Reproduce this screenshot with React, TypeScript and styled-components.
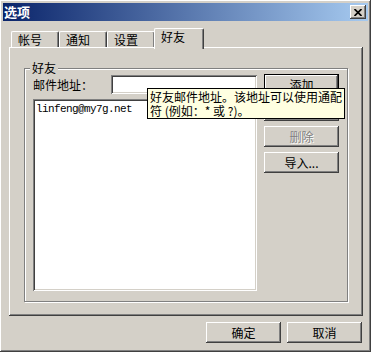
import React from "react";
import styled, { createGlobalStyle } from "styled-components";

const GlobalStyle = createGlobalStyle`
  html, body {
    margin: 0;
    padding: 0;
    background: #d4d0c8;
  }
  body {
    font-family: "Noto Sans CJK SC", "Liberation Sans", sans-serif;
    font-size: 12px;
    color: #000;
  }
`;

const tabs = ["帐号", "通知", "设置", "好友"];

function CloseGlyph() {
  return (
    <svg width="8" height="7" viewBox="0 0 8 7">
      <path d="M0.5 0 L7.5 7 M7.5 0 L0.5 7" stroke="#000" strokeWidth="1.7" fill="none" />
    </svg>
  );
}

export default function App() {
  return (
    <>
      <GlobalStyle />
      <Window>
        <TitleBar>
          <Title>选项</Title>
          <CloseButton>
            <CloseGlyph />
          </CloseButton>
        </TitleBar>
        <Body>
          <TabRow>
            {tabs.map((t) => (
              <Tab key={t} $active={t === "好友"}>
                {t}
              </Tab>
            ))}
          </TabRow>
          <Panel>
            <GroupBox>
              <Legend>好友</Legend>
              <LeftCol>
                <FieldRow>
                  <Label>邮件地址：</Label>
                  <Input />
                </FieldRow>
                <ListBox>
                  <ListItem>linfeng@my7g.net</ListItem>
                </ListBox>
              </LeftCol>
              <RightCol>
                <Button $default>添加</Button>
                <Button disabled>修改</Button>
                <Button disabled>删除</Button>
                <Button>导入...</Button>
              </RightCol>
            </GroupBox>
          </Panel>
          <Footer>
            <Button>确定</Button>
            <Button>取消</Button>
          </Footer>
        </Body>
        <Tooltip>
          好友邮件地址。该地址可以使用通配
          <br />符 (例如：* 或 ?)。
        </Tooltip>
      </Window>
    </>
  );
}

const raised = `
  box-shadow: inset -1px -1px #404040, inset 1px 1px #ffffff,
    inset -2px -2px #808080, inset 2px 2px #d4d0c8;
`;

const sunken = `
  box-shadow: inset 1px 1px #808080, inset -1px -1px #ffffff,
    inset 2px 2px #404040, inset -2px -2px #d4d0c8;
`;

const Window = styled.div`
  position: relative;
  width: 371px;
  height: 352px;
  box-sizing: border-box;
  padding: 3px;
  display: flex;
  flex-direction: column;
  background: #d4d0c8;
  ${raised}
`;

const TitleBar = styled.div`
  flex: none;
  height: 18px;
  display: flex;
  align-items: center;
  justify-content: space-between;
  padding: 0 2px 0 1px;
  background: linear-gradient(to right, #0a246a, #a6caf0);
`;

const Title = styled.span`
  color: #fff;
  font-weight: bold;
  font-size: 13px;
  line-height: 18px;
`;

const CloseButton = styled.div`
  width: 16px;
  height: 14px;
  display: flex;
  align-items: center;
  justify-content: center;
  background: #d4d0c8;
  ${raised}
`;

const Body = styled.div`
  flex: 1;
  display: flex;
  flex-direction: column;
  padding: 7px 5px 0 6px;
`;

const TabRow = styled.div`
  display: flex;
  align-items: flex-end;
  height: 21px;
  margin: 0 0 -2px 2px;
  position: relative;
  z-index: 1;
`;

const Tab = styled.div<{ $active?: boolean }>`
  box-sizing: border-box;
  width: ${(p) => (p.$active ? "50px" : "48px")};
  height: ${(p) => (p.$active ? "21px" : "16px")};
  margin-bottom: ${(p) => (p.$active ? "0" : "2px")};
  margin-left: ${(p) => (p.$active ? "-1px" : "0")};
  padding: ${(p) => (p.$active ? "1px 0 0 6px" : "1px 0 0 6px")};
  line-height: 13px;
  background: #d4d0c8;
  border-top: 1px solid #fff;
  border-left: 1px solid #fff;
  border-right: 1px solid #404040;
  border-radius: 2px 2px 0 0;
  box-shadow: inset -1px 0 #808080;
`;

const Panel = styled.div`
  flex: none;
  height: 269px;
  box-sizing: border-box;
  padding: 21px 0 0 15px;
  ${raised}
`;

const GroupBox = styled.div`
  position: relative;
  width: 324px;
  height: 234px;
  box-sizing: border-box;
  border: 1px solid #808080;
  box-shadow: inset 1px 1px #fff, 1px 1px #fff;
  padding: 5px 0 0 8px;
  display: flex;
  gap: 7px;
`;

const Legend = styled.span`
  position: absolute;
  top: -7px;
  left: 5px;
  padding: 0 2px;
  line-height: 12px;
  background: #d4d0c8;
`;

const LeftCol = styled.div`
  width: 224px;
  display: flex;
  flex-direction: column;
  gap: 5px;
  margin-top: 1px;
`;

const FieldRow = styled.div`
  display: flex;
  align-items: center;
  justify-content: space-between;
  height: 19px;
`;

const Label = styled.span`
  line-height: 12px;
`;

const Input = styled.div`
  width: 146px;
  height: 19px;
  background: #fff;
  ${sunken}
`;

const ListBox = styled.div`
  height: 192px;
  box-sizing: border-box;
  padding: 3px 3px;
  background: #fff;
  ${sunken}
`;

const ListItem = styled.div`
  font-family: "Liberation Mono", "DejaVu Sans Mono", monospace;
  font-size: 11px;
  letter-spacing: -0.6px;
  line-height: 14px;
`;

const RightCol = styled.div`
  display: flex;
  flex-direction: column;
  gap: 5px;
`;

const Button = styled.button<{ $default?: boolean }>`
  width: 75px;
  height: 21px;
  box-sizing: border-box;
  padding: 0;
  font: inherit;
  font-size: 12px;
  line-height: 12px;
  color: #000;
  background: #d4d0c8;
  border: ${(p) => (p.$default ? "1px solid #000" : "none")};
  ${raised}

  &:disabled {
    color: #808080;
    text-shadow: 1px 1px #fff;
  }
`;

const Footer = styled.div`
  display: flex;
  justify-content: flex-end;
  gap: 6px;
  margin: 6px 1px 0 0;
`;

const Tooltip = styled.div`
  position: absolute;
  left: 147px;
  top: 88px;
  width: 198px;
  height: 31px;
  box-sizing: border-box;
  padding: 1px 0 0 2px;
  border: 1px solid #000;
  background: #ffffe1;
  line-height: 14px;
  white-space: nowrap;
  z-index: 5;
`;
